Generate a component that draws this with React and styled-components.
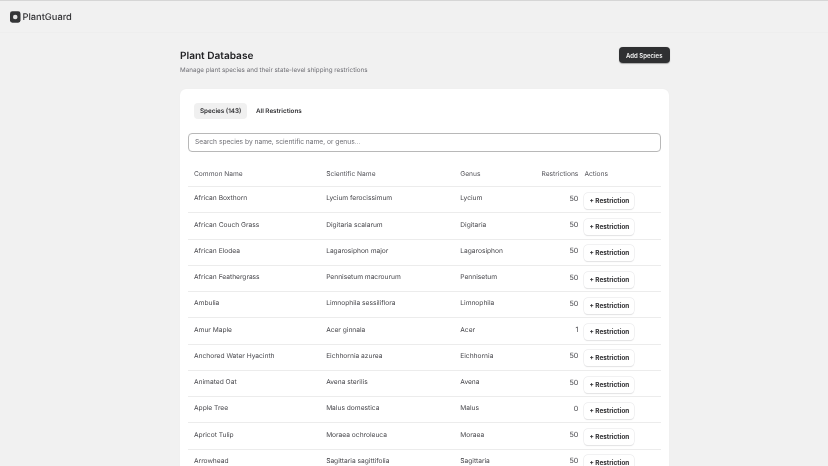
import React from 'react'
import styled, { createGlobalStyle } from 'styled-components'

const GlobalStyle = createGlobalStyle`
    * { box-sizing: border-box; }
    html, body { margin: 0; padding: 0; height: 466px; overflow: hidden; }
    body {
        background: #f1f1f1;
        font-family: Inter, "Liberation Sans", sans-serif;
        color: #27272a;
        text-rendering: geometricPrecision;
    }
`

const Page = styled.div`
    border-top: 1px solid #d6d6d6;
    will-change: transform;
`

const NavBar = styled.div`
    height: 32px;
    padding: 1px 10px 0;
    display: flex;
    align-items: center;
    border-bottom: 1px solid #eeeeee;
`

const Brand = styled.div`
    display: flex;
    align-items: center;
    gap: 2px;
    font-size: 9.3px;
    font-weight: 500;
    color: #333336;

    svg { display: block; }
`

const Main = styled.div`
    width: 488.5px;
    margin-left: 180px;
    padding-top: 15px;
`

const Header = styled.div`
    display: flex;
    justify-content: space-between;
    align-items: flex-start;
    margin-bottom: 14px;
`

const Title = styled.h1`
    margin: 0 0 1px;
    font-size: 10.1px;
    line-height: 16px;
    font-weight: 600;
    color: #222225;
`

const Subtitle = styled.p`
    margin: 0;
    font-size: 6.27px;
    line-height: 10px;
    color: #6f6f75;
`

const AddButton = styled.button`
    width: 50.5px;
    height: 16px;
    margin-top: -1px;
    margin-right: -1px;
    padding: 0;
    border: none;
    border-radius: 4px;
    background: #2f3032;
    color: #f4f4f4;
    font-family: inherit;
    font-size: 6px;
    font-weight: 600;
    box-shadow: 0 0.5px 1px rgba(0, 0, 0, 0.3);
`

const Card = styled.div`
    background: #fff;
    border-radius: 6px;
    padding: 14px 8px 0;
    box-shadow: 0 0 1px rgba(0, 0, 0, 0.06);
`

const Tabs = styled.div`
    display: flex;
    gap: 2.5px;
    padding-left: 6px;
    margin-bottom: 13.5px;
`

const Tab = styled.div`
    height: 16px;
    padding: 0 6px;
    border-radius: 4px;
    display: flex;
    align-items: center;
    font-size: 6.3px;
    font-weight: 600;
    color: #2e2e31;
    background: ${props => (props.$active ? '#f0f0f0' : 'transparent')};
`

const Search = styled.input`
    display: block;
    width: 100%;
    height: 19px;
    padding: 0 6px;
    border: 1px solid #b8b8b8;
    border-radius: 4px;
    background: #fff;
    font-family: inherit;
    font-size: 6.65px;
    color: #27272a;
    outline: none;

    &::placeholder { color: #6f6f75; opacity: 1; }
`

const Table = styled.table`
    width: 100%;
    margin-top: 10px;
    border-collapse: collapse;
    table-layout: fixed;
    font-size: 6.65px;
`

const Th = styled.th`
    height: 25px;
    padding: 0 ${props => (props.$flush ? 0 : 6)}px;
    font-weight: 400;
    color: #55555b;
    border-bottom: 1px solid #ececec;
    text-align: ${props => props.$align || 'left'};
    width: ${props => props.$width}px;
`

const Td = styled.td`
    height: 26.25px;
    padding: 0 ${props => (props.$flush ? 0 : 6)}px 2.5px;
    color: #46464b;
    border-bottom: 1px solid #ececec;
    text-align: ${props => props.$align || 'left'};
`

const Count = styled.span`
    font-size: 7.2px;
`

const RowButton = styled.button`
    display: block;
    position: relative;
    top: 2.5px;
    width: 50px;
    height: 16px;
    padding: 0;
    border: none;
    border-radius: 4px;
    background: #fff;
    box-shadow: 0 0 0 0.5px #e6e6e8, 0 0.5px 1px rgba(0, 0, 0, 0.12);
    font-family: inherit;
    font-size: 6.4px;
    font-weight: 700;
    color: #2e2e31;
`

const species = [
    ['African Boxthorn', 'Lycium ferocissimum', 'Lycium', 50],
    ['African Couch Grass', 'Digitaria scalarum', 'Digitaria', 50],
    ['African Elodea', 'Lagarosiphon major', 'Lagarosiphon', 50],
    ['African Feathergrass', 'Pennisetum macrourum', 'Pennisetum', 50],
    ['Ambulia', 'Limnophila sessiliflora', 'Limnophila', 50],
    ['Amur Maple', 'Acer ginnala', 'Acer', 1],
    ['Anchored Water Hyacinth', 'Eichhornia azurea', 'Eichhornia', 50],
    ['Animated Oat', 'Avena sterilis', 'Avena', 50],
    ['Apple Tree', 'Malus domestica', 'Malus', 0],
    ['Apricot Tulip', 'Moraea ochroleuca', 'Moraea', 50],
    ['Arrowhead', 'Sagittaria sagittifolia', 'Sagittaria', 50],
]

const App = () => {
    return (
        <>
            <GlobalStyle />
            <Page>
                <NavBar>
                    <Brand>
                        <svg width="10.5" height="12" viewBox="0 0 11 12">
                            <rect x="0" y="0" width="11" height="12" rx="2.5" fill="#343537" />
                            <circle cx="5.5" cy="6" r="2.4" fill="#e4e4e4" />
                        </svg>
                        PlantGuard
                    </Brand>
                </NavBar>
                <Main>
                    <Header>
                        <div>
                            <Title>Plant Database</Title>
                            <Subtitle>Manage plant species and their state-level shipping restrictions</Subtitle>
                        </div>
                        <AddButton>Add Species</AddButton>
                    </Header>
                    <Card>
                        <Tabs>
                            <Tab $active>Species (143)</Tab>
                            <Tab>All Restrictions</Tab>
                        </Tabs>
                        <Search placeholder="Search species by name, scientific name, or genus..." />
                        <Table>
                            <thead>
                                <tr>
                                    <Th $width={132}>Common Name</Th>
                                    <Th $width={134}>Scientific Name</Th>
                                    <Th $width={74}>Genus</Th>
                                    <Th $width={56} $align="right">Restrictions</Th>
                                    <Th $width={76} $flush>Actions</Th>
                                </tr>
                            </thead>
                            <tbody>
                                {species.map(item => (
                                    <tr key={item[0]}>
                                        <Td>{item[0]}</Td>
                                        <Td>{item[1]}</Td>
                                        <Td>{item[2]}</Td>
                                        <Td $align="right"><Count>{item[3]}</Count></Td>
                                        <Td $flush><RowButton>+ Restriction</RowButton></Td>
                                    </tr>
                                ))}
                            </tbody>
                        </Table>
                    </Card>
                </Main>
            </Page>
        </>
    )
}

export default App
